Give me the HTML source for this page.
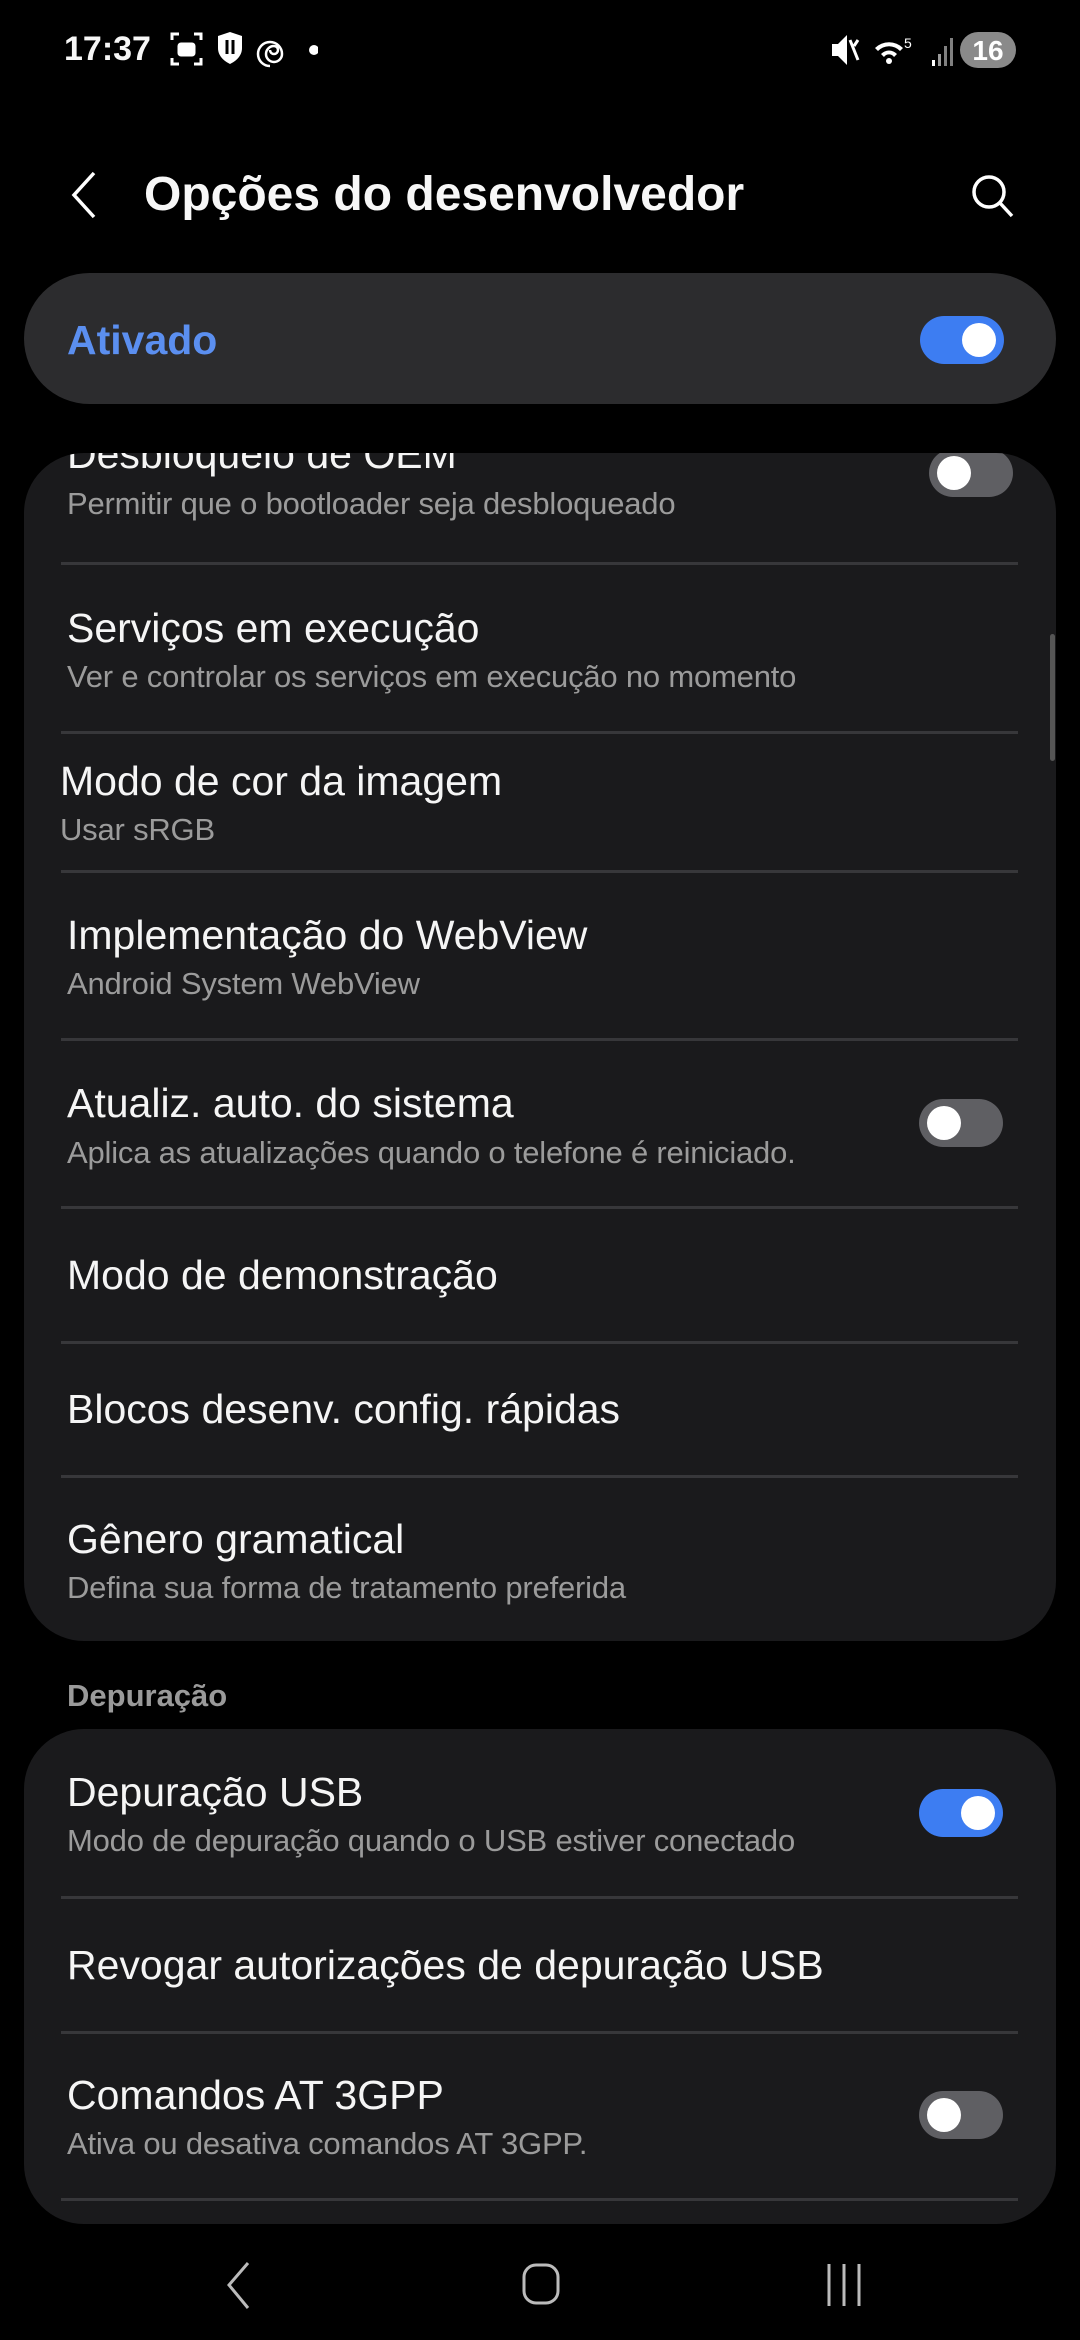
<!DOCTYPE html>
<html><head><meta charset="utf-8"><style>
*{margin:0;padding:0;box-sizing:border-box}
body{width:1080px;height:2340px;background:#000;position:relative;overflow:hidden;font-family:"Liberation Sans",sans-serif;color:#f7f7f7}
.a{position:absolute;white-space:nowrap}
.t{font-size:41px;line-height:50px;color:#f5f5f5}
.s{font-size:31px;line-height:38px;color:#9b9b9b;letter-spacing:-0.2px}
.card{position:absolute;left:24px;width:1032px;background:#1a1a1c;border-radius:60px;overflow:hidden}
.div{position:absolute;left:37px;width:957px;height:3px;background:#37373a}
.tg{position:absolute;width:84px;height:48px;border-radius:24px}
.tg.on{background:#3d7df2}
.tg.off{background:#5f5f63}
.tg i{position:absolute;top:7px;width:34px;height:34px;border-radius:50%;background:#fff}
.tg.on i{right:8px}.tg.off i{left:8px}
</style></head><body>
<div class="a" style="left:64px;top:29px;font-size:34px;font-weight:bold;line-height:40px">17:37</div>
<svg class="a" style="left:168px;top:30px" width="150" height="40" viewBox="0 0 150 40">
<g fill="none" stroke="#fff" stroke-width="3"><path d="M4 10V4h7M26 4h7v6M33 28v6h-7M11 34H4v-6"/><rect x="11" y="14" width="15" height="11" rx="2" fill="#fff"/>
<path d="M50 6l12-4 12 4v12c0 8-6 13-12 16-6-3-12-8-12-16z" fill="#fff" stroke="none"/><path d="M59 10v14M65 10v14" stroke="#000" stroke-width="3"/>
<path d="M102 20a4 4 0 1 0 4-4a8 8 0 1 0 8 8a12 12 0 1 0-12 12" stroke-width="2.5"/></g>
<circle cx="146" cy="20" r="5" fill="#fff"/></svg>
<svg class="a" style="left:830px;top:30px" width="190" height="40" viewBox="0 0 190 40">
<g fill="#fff"><path d="M2 14h6l9-9v30l-9-9H2z"/><path d="M20 10l8 20M28 10l-4 6" stroke="#fff" stroke-width="3"/>
<path d="M45 18a20 20 0 0 1 28 0l-3 3a15 15 0 0 0-22 0zM51 24a11 11 0 0 1 16 0l-3 3a6 6 0 0 0-10 0z"/><circle cx="59" cy="31" r="3"/>
<text x="74" y="18" font-size="14" font-family="Liberation Sans">5</text>
<rect x="102" y="30" width="3" height="6"/><rect x="108" y="24" width="3" height="12" opacity=".6"/><rect x="114" y="16" width="3" height="20" opacity=".5"/><rect x="120" y="8" width="3" height="28" opacity=".5"/></g>
<rect x="130" y="2" width="56" height="36" rx="18" fill="#8a8a8a"/><text x="158" y="30" text-anchor="middle" font-size="28" font-weight="bold" fill="#fff" font-family="Liberation Sans">16</text></svg>
<svg class="a" style="left:66px;top:170px" width="36" height="50" viewBox="0 0 36 50"><path d="M28 3L8 25l20 22" fill="none" stroke="#fff" stroke-width="3.5"/></svg>
<div class="a" style="left:144px;top:167px;font-size:48px;font-weight:bold;line-height:56px">Opções do desenvolvedor</div>
<svg class="a" style="left:968px;top:172px" width="50" height="50" viewBox="0 0 50 50"><circle cx="21" cy="20" r="15" fill="none" stroke="#fff" stroke-width="3.5"/><path d="M32 31l12 13" stroke="#fff" stroke-width="3.5"/></svg>
<div class="a" style="left:24px;top:273px;width:1032px;height:131px;border-radius:66px;background:#2c2c2e"></div>
<div class="a" style="left:67px;top:315px;font-size:41px;font-weight:bold;color:#5b8ff0;line-height:50px">Ativado</div>
<div class="tg on" style="left:920px;top:316px"><i></i></div>
<div class="card" style="top:453px;height:1188px">
 <div class="a t" style="left:43px;top:-24px">Desbloqueio de OEM</div>
 <div class="a s" style="left:43px;top:32px">Permitir que o bootloader seja desbloqueado</div>
 <div class="tg off" style="left:905px;top:-4px"><i></i></div>
 <div class="div" style="top:109px"></div>
 <div class="a t" style="left:43px;top:150px">Serviços em execução</div>
 <div class="a s" style="left:43px;top:205px">Ver e controlar os serviços em execução no momento</div>
 <div class="div" style="top:278px"></div>
 <div class="a t" style="left:36px;top:303px">Modo de cor da imagem</div>
 <div class="a s" style="left:36px;top:358px">Usar sRGB</div>
 <div class="div" style="top:417px"></div>
 <div class="a t" style="left:43px;top:457px">Implementação do WebView</div>
 <div class="a s" style="left:43px;top:512px">Android System WebView</div>
 <div class="div" style="top:585px"></div>
 <div class="a t" style="left:43px;top:625px">Atualiz. auto. do sistema</div>
 <div class="a s" style="left:43px;top:681px">Aplica as atualizações quando o telefone é reiniciado.</div>
 <div class="tg off" style="left:895px;top:646px"><i></i></div>
 <div class="div" style="top:753px"></div>
 <div class="a t" style="left:43px;top:797px">Modo de demonstração</div>
 <div class="div" style="top:888px"></div>
 <div class="a t" style="left:43px;top:931px">Blocos desenv. config. rápidas</div>
 <div class="div" style="top:1022px"></div>
 <div class="a t" style="left:43px;top:1061px">Gênero gramatical</div>
 <div class="a s" style="left:43px;top:1116px">Defina sua forma de tratamento preferida</div>
</div>
<div class="a" style="left:1050px;top:634px;width:5px;height:127px;border-radius:3px;background:#555"></div>
<div class="a" style="left:67px;top:1678px;font-size:31px;font-weight:bold;color:#9a9a9a;line-height:36px">Depuração</div>
<div class="card" style="top:1729px;height:495px">
 <div class="a t" style="left:43px;top:38px">Depuração USB</div>
 <div class="a s" style="left:43px;top:93px">Modo de depuração quando o USB estiver conectado</div>
 <div class="tg on" style="left:895px;top:60px"><i></i></div>
 <div class="div" style="top:167px"></div>
 <div class="a t" style="left:43px;top:211px">Revogar autorizações de depuração USB</div>
 <div class="div" style="top:302px"></div>
 <div class="a t" style="left:43px;top:341px">Comandos AT 3GPP</div>
 <div class="a s" style="left:43px;top:396px">Ativa ou desativa comandos AT 3GPP.</div>
 <div class="tg off" style="left:895px;top:362px"><i></i></div>
 <div class="div" style="top:469px"></div>
</div>
<svg class="a" style="left:0;top:2250px" width="1080" height="70" viewBox="0 0 1080 70">
<g fill="none" stroke="#bbb" stroke-width="3"><path d="M248 13L229 35l19 23"/><rect x="524" y="15" width="34" height="38" rx="12"/><path d="M829 14v42M844 14v42M859 14v42"/></g></svg>
</body></html>
